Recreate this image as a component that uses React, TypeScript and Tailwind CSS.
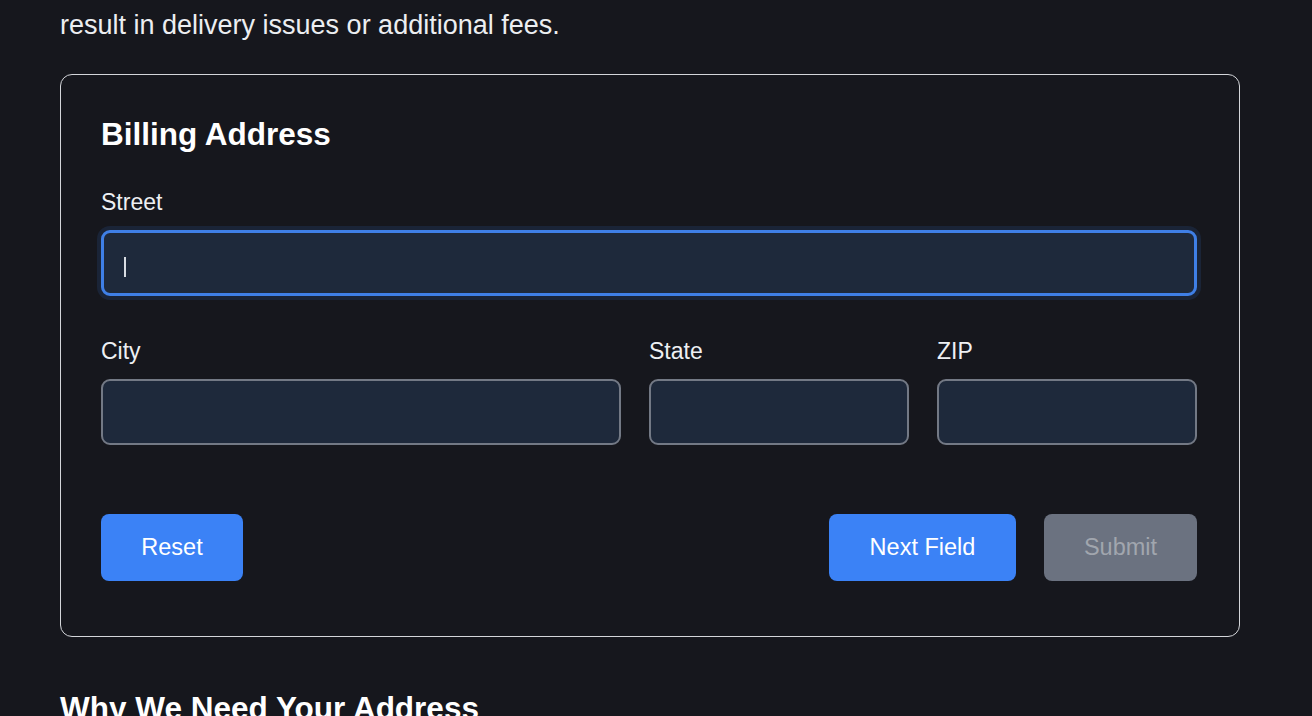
import React from "react";

const font = { fontFamily: '"Liberation Sans", Arial, sans-serif' };

const Field = ({
  label,
  focused = false,
}: {
  label: string;
  focused?: boolean;
}) => (
  <div className="flex flex-col">
    <label className="text-[23px] leading-[28px] text-[#eef0f3] mb-[14px]">
      {label}
    </label>
    <div className="relative">
      <input
        type="text"
        readOnly
        className={
          focused
            ? "block w-full h-[66px] rounded-[9px] bg-[#1e293b] border-[3px] border-[#3f7fe6] shadow-[0_0_0_4px_rgba(59,130,246,0.12)] outline-none px-5 text-[22px] text-white"
            : "block w-full h-[66px] rounded-[9px] bg-[#1e293b] border-2 border-[#737985] outline-none px-5 text-[22px] text-white"
        }
      />
      {focused && (
        <span className="absolute left-[23px] top-[27px] w-[2px] h-[20px] bg-[#d8dce2]" />
      )}
    </div>
  </div>
);

export default function App() {
  return (
    <div className="min-h-screen bg-[#16171d] overflow-hidden" style={font}>
      <div className="pl-[60px] pr-[72px]">
        <p className="pt-[5px] text-[27px] leading-[40px] text-[#eceef1] mb-[29px]">
          result in delivery issues or additional fees.
        </p>

        {/* Billing card */}
        <div className="rounded-[12px] border border-[#d4d6da] pl-10 pr-[42px] pt-10 pb-[55px]">
          <h2 className="text-[31.5px] leading-[38px] font-bold text-white mb-[35px]">
            Billing Address
          </h2>

          <div className="mb-[41px]">
            <Field label="Street" focused />
          </div>

          <div className="grid grid-cols-[2fr_1fr_1fr] gap-7">
            <Field label="City" />
            <Field label="State" />
            <Field label="ZIP" />
          </div>

          <div className="flex items-center mt-[69px]">
            <button className="h-[67px] w-[142px] rounded-[8px] bg-[#3b82f6] text-[23.5px] text-white">
              Reset
            </button>
            <div className="ml-auto flex gap-7">
              <button className="h-[67px] w-[187px] rounded-[8px] bg-[#3b82f6] text-[23.5px] text-white">
                Next Field
              </button>
              <button className="h-[67px] w-[153px] rounded-[8px] bg-[#6b7280] text-[23.5px] text-[#a1a6ae]">
                Submit
              </button>
            </div>
          </div>
        </div>

        <h2 className="mt-[52px] text-[31.5px] leading-[38px] font-bold text-white">
          Why We Need Your Address
        </h2>
      </div>
    </div>
  );
}
